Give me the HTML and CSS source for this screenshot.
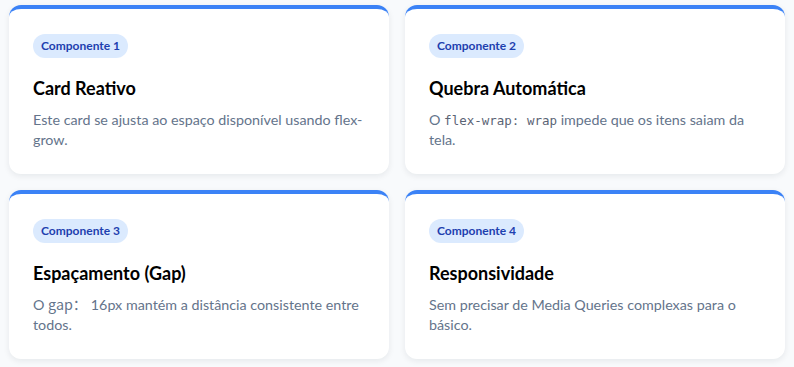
FILE: index.html
```html
<!DOCTYPE html>
<html lang="pt-BR">
<head>
<meta charset="utf-8">
<title>Cards</title>
<link rel="stylesheet" href="styles.css">
</head>
<body>
<div class="grid">
  <div class="card">
    <span class="badge">Componente 1</span>
    <h2 class="title">Card Reativo</h2>
    <p class="desc">Este card se ajusta ao espaço disponível usando flex-grow.</p>
  </div>
  <div class="card">
    <span class="badge">Componente 2</span>
    <h2 class="title">Quebra Automática</h2>
    <p class="desc">O <code>flex-wrap: wrap</code> impede que os itens saiam da tela.</p>
  </div>
  <div class="card">
    <span class="badge">Componente 3</span>
    <h2 class="title">Espaçamento (Gap)</h2>
    <p class="desc">O <span class="gap">gap：</span> 16px mantém a distância consistente entre todos.</p>
  </div>
  <div class="card">
    <span class="badge">Componente 4</span>
    <h2 class="title">Responsividade</h2>
    <p class="desc">Sem precisar de Media Queries complexas para o básico.</p>
  </div>
</div>
</body>
</html>
```
FILE: styles.css
```css
html, body {
  margin: 0;
  padding: 0;
  background: #f8fafc;
}
body {
  font-family: "Lato", "Noto Sans", sans-serif;
  padding: 5px 9px 9px 9px;
}
.grid {
  display: flex;
  flex-wrap: wrap;
  gap: 16px;
}
.card {
  flex: 1 1 300px;
  box-sizing: border-box;
  background: #ffffff;
  border-top: 4px solid #3b82f6;
  border-radius: 12px;
  box-shadow: 0 2px 6px rgba(15, 23, 42, 0.08);
  padding: 25px 24px 24px 24px;
  display: flex;
  flex-direction: column;
  align-items: flex-start;
}
.badge {
  display: inline-block;
  background: #dbeafe;
  color: #1e40af;
  font-size: 12px;
  font-weight: 700;
  line-height: 24px;
  height: 24px;
  padding: 0 8px;
  border-radius: 12px;
}
.title {
  margin: 18px 0 10px 0;
  font-size: 18px;
  font-weight: 700;
  line-height: 24px;
  color: #000000;
}
.desc {
  margin: 0;
  font-size: 14.3px;
  line-height: 20px;
  color: #64748b;
}
code {
  font-family: "DejaVu Sans Mono", monospace;
  font-size: 12.5px;
  line-height: 1;
  color: #5b6475;
}
.gap {
  font-family: "Noto Sans CJK SC", "Lato", sans-serif;
  line-height: 1;
}
```
